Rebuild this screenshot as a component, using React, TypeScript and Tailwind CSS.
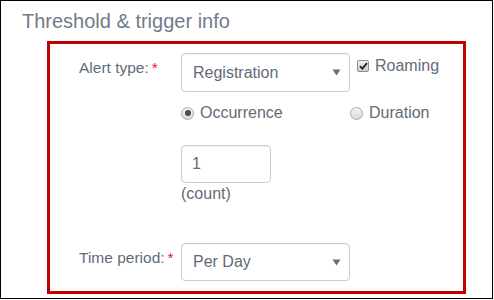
import React from "react";

const Arrow = () => (
  <svg width="9" height="7" viewBox="0 0 9 7" className="block">
    <path d="M0.5 0.5 L8.5 0.5 L4.5 6.5 Z" fill="#5f7380" />
  </svg>
);

const Radio = ({ checked }: { checked?: boolean }) => (
  <span className="flex h-[13px] w-[13px] items-center justify-center rounded-full border border-[#a9a9a9] bg-gradient-to-b from-[#f4f4f4] to-[#d9d9d9]">
    {checked && <span className="block h-[6px] w-[6px] rounded-full bg-[#4a4a4a]" />}
  </span>
);

const Checkbox = () => (
  <span className="flex h-[12px] w-[12px] items-center justify-center rounded-[2px] border border-[#8f8f8f] bg-gradient-to-b from-[#eeeeee] to-[#cfcfcf]">
    <svg width="9" height="8" viewBox="0 0 9 8" className="block">
      <path d="M1 4.2 L3.4 6.6 L8 1.2" fill="none" stroke="#222" strokeWidth="1.9" />
    </svg>
  </span>
);

const Label = ({ text }: { text: string }) => (
  <div className="w-[102px] pt-[5px] leading-5 text-[15.5px] text-[#5f6c79]">
    {text}
    <span className="ml-[3px] text-[#e8141c]">*</span>
  </div>
);

const Select = ({ value, h }: { value: string; h: string }) => (
  <div
    className={`flex w-[169px] ${h} items-center justify-between rounded-[4px] border border-[#cccccc] bg-white pl-[11px] pr-[8px] text-[16px] text-[#5f6c79] shadow-[inset_0_1px_1px_rgba(0,0,0,0.05)]`}
  >
    <span>{value}</span>
    <Arrow />
  </div>
);

export default function App() {
  return (
    <div
      className="h-[299px] w-[493px] border border-black bg-white"
      style={{ fontFamily: '"Liberation Sans", Arial, sans-serif' }}
    >
      <div className="ml-[21px] mt-[8px] text-[20px] leading-[24px] text-[#6e7c8a]">
        Threshold &amp; trigger info
      </div>
      <div className="ml-[46px] mt-[8px] h-[253px] w-[419px] border-[3px] border-[#c00000]">
        {/* Row 1 */}
        <div className="mt-[9px] flex pl-[29px]">
          <Label text="Alert type:" />
          <Select value="Registration" h="h-[39px]" />
          <div className="ml-[7px] mt-[3px] flex h-5 items-center gap-[6px] text-[16px] leading-5 text-[#5f6c79]">
            <Checkbox />
            <span>Roaming</span>
          </div>
        </div>
        {/* Row 2 */}
        <div className="mt-[11px] flex h-5 items-center pl-[131px] text-[16px] leading-5 text-[#5f6c79]">
          <div className="flex w-[169px] items-center gap-[6px]">
            <Radio checked />
            <span>Occurrence</span>
          </div>
          <div className="flex items-center gap-[6px]">
            <Radio />
            <span>Duration</span>
          </div>
        </div>
        {/* Row 3 */}
        <div className="mt-[22px] pl-[131px]">
          <div className="flex h-[38px] w-[90px] items-center rounded-[4px] border border-[#cccccc] pl-[10px] text-[16px] text-[#5f6c79] shadow-[inset_0_1px_1px_rgba(0,0,0,0.05)]">
            1
          </div>
          <div className="mt-[2px] text-[16px] leading-[18px] text-[#5f6c79]">(count)</div>
        </div>
        {/* Row 4 */}
        <div className="mt-[40px] flex pl-[29px]">
          <Label text="Time period:" />
          <Select value="Per Day" h="h-[38px]" />
        </div>
      </div>
    </div>
  );
}
